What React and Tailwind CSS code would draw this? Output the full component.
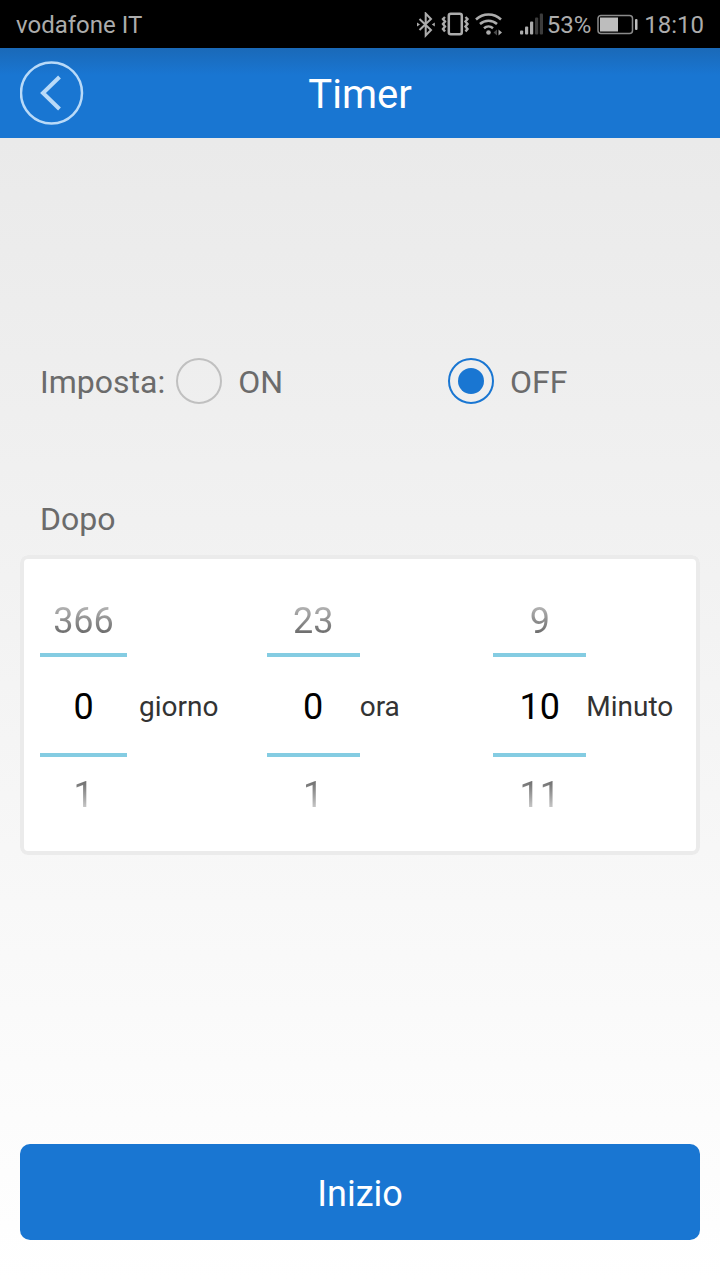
import { useState } from 'react';

const WHEELS = [
  { id: 'days', label: 'giorno', count: 367, width: 'w-[87px]', labelGap: 'ml-3' },
  { id: 'hours', label: 'ora', count: 24, width: 'w-[93px]', labelGap: 'ml-0' },
  { id: 'minutes', label: 'Minuto', count: 60, width: 'w-[93px]', labelGap: 'ml-0' },
];

function BluetoothIcon() {
  return (
    <svg width="20" height="26" viewBox="0 0 20 26" fill="none" stroke="currentColor" strokeWidth="2">
      <path d="M2.500 7 14 18 8.700 23.500V1.500L14 7 2.500 18" />
      <path d="M0 10.500 3 12.500 0 14.500zM17.800 10.500v4l-3-2z" fill="currentColor" stroke="none" />
    </svg>
  );
}

function VibrateIcon() {
  return (
    <svg width="30" height="26" viewBox="0 0 30 26" fill="none" stroke="currentColor">
      <rect x="7.800" y="1.800" width="13" height="20.500" rx="2" strokeWidth="2.500" />
      <path
        d="M4 5 2 7 4 9.500 2 12 4 14.500 2 17 4 19.500M24.500 5 26.500 7 24.500 9.500 26.500 12 24.500 14.500 26.500 17 24.500 19.500"
        strokeWidth="2.400"
      />
    </svg>
  );
}

function WifiIcon() {
  return (
    <svg width="40" height="26" viewBox="0 0 40 26" fill="none" stroke="currentColor" strokeWidth="2.500">
      <path d="M1 7.500a18 18 0 0 1 25 0M5 12a12.500 12.500 0 0 1 17 0M9 16.200a7 7 0 0 1 9 0" />
      <circle cx="13.500" cy="20.500" r="2.300" fill="currentColor" stroke="none" />
      <path d="M22 17.500v6l-3.500-3z" fill="#4a4a4a" stroke="none" />
      <path d="M23.500 17.500v6l3.500-3z" fill="currentColor" stroke="none" />
    </svg>
  );
}

function SignalIcon() {
  return (
    <svg width="24" height="26" viewBox="0 0 24 26" fill="currentColor">
      <rect x="1" y="18.500" width="3.200" height="4" rx="1" />
      <rect x="6" y="14.500" width="3.200" height="8" rx="1" />
      <rect x="11" y="9.500" width="3.200" height="13" rx="1" />
      <rect x="16" y="5.500" width="3.200" height="17" rx="1" fill="#3c3c3c" />
      <rect x="20.800" y="1.500" width="3.200" height="21" rx="1" fill="#3c3c3c" />
    </svg>
  );
}

function BatteryIcon() {
  return (
    <svg width="45" height="26" viewBox="0 0 45 26" fill="none">
      <rect x="3" y="3.500" width="34.500" height="18" rx="3" stroke="#8a8a8a" strokeWidth="1.500" />
      <rect x="5" y="5.500" width="18" height="14" fill="#bdbdbd" />
      <rect x="40" y="7" width="2.500" height="11" rx="1" fill="#bdbdbd" />
    </svg>
  );
}

function StatusBar() {
  return (
    <div className="flex h-12 items-center justify-between bg-black px-4 pt-0.5 text-2xl text-[#acacac]">
      <span>vodafone IT</span>
      <div className="flex items-center gap-1">
        <BluetoothIcon />
        <VibrateIcon />
        <WifiIcon />
        <SignalIcon />
        <span>53%</span>
        <BatteryIcon />
        <span>18:10</span>
      </div>
    </div>
  );
}

function PowerOption({ value, selected, onSelect }) {
  return (
    <label className="flex flex-1 items-center gap-4">
      <input
        type="radio"
        name="power"
        value={value}
        checked={selected}
        onChange={() => onSelect(value)}
        className="mb-0.5 size-[46px] appearance-none rounded-full border-2 border-[#c0c0c0] bg-clip-content p-2 checked:border-[#1976d2] checked:bg-[#1976d2]"
      />
      {value}
    </label>
  );
}

function Wheel({ wheel, value, onChange }) {
  const previous = (value + wheel.count - 1) % wheel.count;
  const next = (value + 1) % wheel.count;

  return (
    <div className="flex items-start pl-5">
      <div
        role="group"
        aria-label={wheel.label}
        className={`flex shrink-0 flex-col text-center text-4xl ${wheel.width}`}
      >
        <button
          type="button"
          onClick={() => onChange(previous)}
          className="h-12 bg-linear-to-b from-[#b8b8b8] to-[#606060] to-70% bg-clip-text pb-4 leading-8 text-transparent"
        >
          {previous}
        </button>
        <output className="border-y-4 border-[#84cce2] pt-1 leading-[92px] text-black">{value}</output>
        <button
          type="button"
          onClick={() => onChange(next)}
          className="h-16 bg-linear-to-b from-[#606060] from-30% to-[#cacaca] to-80% bg-clip-text pt-4 pb-1 leading-[44px] text-transparent"
        >
          {next}
        </button>
      </div>
      <span className={`pt-14 text-[28px] leading-[92px] text-[#333] ${wheel.labelGap}`}>{wheel.label}</span>
    </div>
  );
}

export default function App() {
  const [power, setPower] = useState('OFF');
  const [delay, setDelay] = useState({ days: 0, hours: 0, minutes: 10 });

  return (
    <div className="flex min-h-screen flex-col font-[Roboto,sans-serif]">
      <StatusBar />

      <header className="grid h-[90px] grid-cols-[64px_1fr_64px] items-center bg-linear-to-b from-[#1a69b8] to-[#1976d2] to-30% px-5">
        <button type="button" aria-label="Indietro" className="text-[#b9daf8]">
          <svg width="64" height="64" viewBox="0 0 64 64" fill="none" stroke="currentColor">
            <circle cx="31.500" cy="32" r="30.500" strokeWidth="2.500" />
            <path d="M39.500 16 23 32 39.500 48" strokeWidth="4" />
          </svg>
        </button>
        <h1 className="pt-1 text-center text-[40px] text-white">Timer</h1>
      </header>

      <main className="flex flex-1 flex-col bg-linear-to-b from-[#eaeaea] to-white px-5 pt-[220px] pb-10 text-[32px] text-[#6b6b6b]">
        <fieldset className="-mr-5 flex items-center pl-5">
          <span className="mr-[11px]">Imposta:</span>
          <PowerOption value="ON" selected={power === 'ON'} onSelect={setPower} />
          <PowerOption value="OFF" selected={power === 'OFF'} onSelect={setPower} />
        </fieldset>

        <h2 className="mt-[93px] mb-4 pl-5 leading-10">Dopo</h2>
        <section className="grid grid-cols-3 rounded-lg bg-white pt-[50px] pb-[34px] shadow-[inset_0_0_0_4px_#ebebeb]">
          {WHEELS.map((wheel) => (
            <Wheel
              key={wheel.id}
              wheel={wheel}
              value={delay[wheel.id]}
              onChange={(value) => setDelay({ ...delay, [wheel.id]: value })}
            />
          ))}
        </section>

        <button type="button" className="mt-auto h-24 rounded-[10px] bg-[#1976d2] pt-1 text-4xl text-white">
          Inizio
        </button>
      </main>
    </div>
  );
}
